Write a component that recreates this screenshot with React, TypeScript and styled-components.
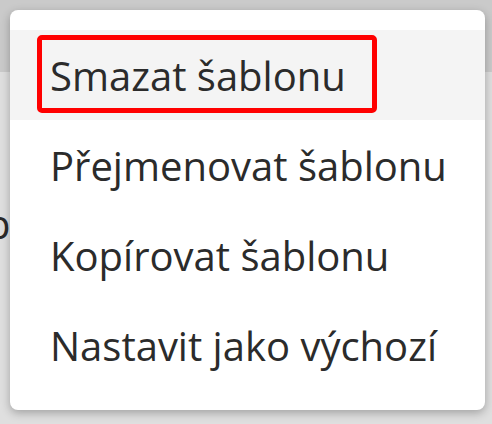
import React from 'react'
import styled, { createGlobalStyle } from 'styled-components'

const GlobalStyle = createGlobalStyle`
  html, body {
    margin: 0;
    padding: 0;
  }
  body {
    background: #dfdfdf;
    font-family: 'Open Sans', 'Noto Sans', sans-serif;
  }
`

// Dimmed page behind the menu
const Page = styled.div`
  position: relative;
  width: 492px;
  height: 424px;
  overflow: hidden;
  background: #dfdfdf;
`

const HeaderBand = styled.div`
  height: 72px;
  background: #cacaca;
`

const BackText = styled.div`
  margin: 132px 0 0 -14px;
  font-size: 40px;
  line-height: 40px;
  color: #2a2a2a;
`

// The context menu card
const Menu = styled.ul`
  position: absolute;
  top: 10px;
  left: 10px;
  width: 475px;
  margin: 0;
  padding: 20px 0;
  list-style: none;
  background: #fff;
  border-radius: 8px;
  box-shadow: 0 3px 10px rgba(0, 0, 0, 0.28);
`

const MenuItem = styled.li<{ $active?: boolean }>`
  position: relative;
  display: flex;
  align-items: center;
  height: 90px;
  padding-left: 40px;
  font-size: 40px;
  color: #2b2b2b;
  background: ${(p) => (p.$active ? '#f4f4f4' : 'transparent')};
  white-space: nowrap;
`

// Red annotation frame drawn over the first item
const Highlight = styled.span`
  position: absolute;
  top: 5px;
  left: 27px;
  width: 340px;
  height: 78px;
  box-sizing: border-box;
  border: 5px solid #ff0000;
  border-radius: 5px;
  pointer-events: none;
`

const items = ['Smazat šablonu', 'Přejmenovat šablonu', 'Kopírovat šablonu', 'Nastavit jako výchozí']

export default function App() {
  return (
    <>
      <GlobalStyle />
      <Page>
        <HeaderBand />
        <BackText>p</BackText>
        <Menu>
          {items.map((label, i) => (
            <MenuItem key={label} $active={i === 0}>
              {i === 0 && <Highlight />}
              {label}
            </MenuItem>
          ))}
        </Menu>
      </Page>
    </>
  )
}
